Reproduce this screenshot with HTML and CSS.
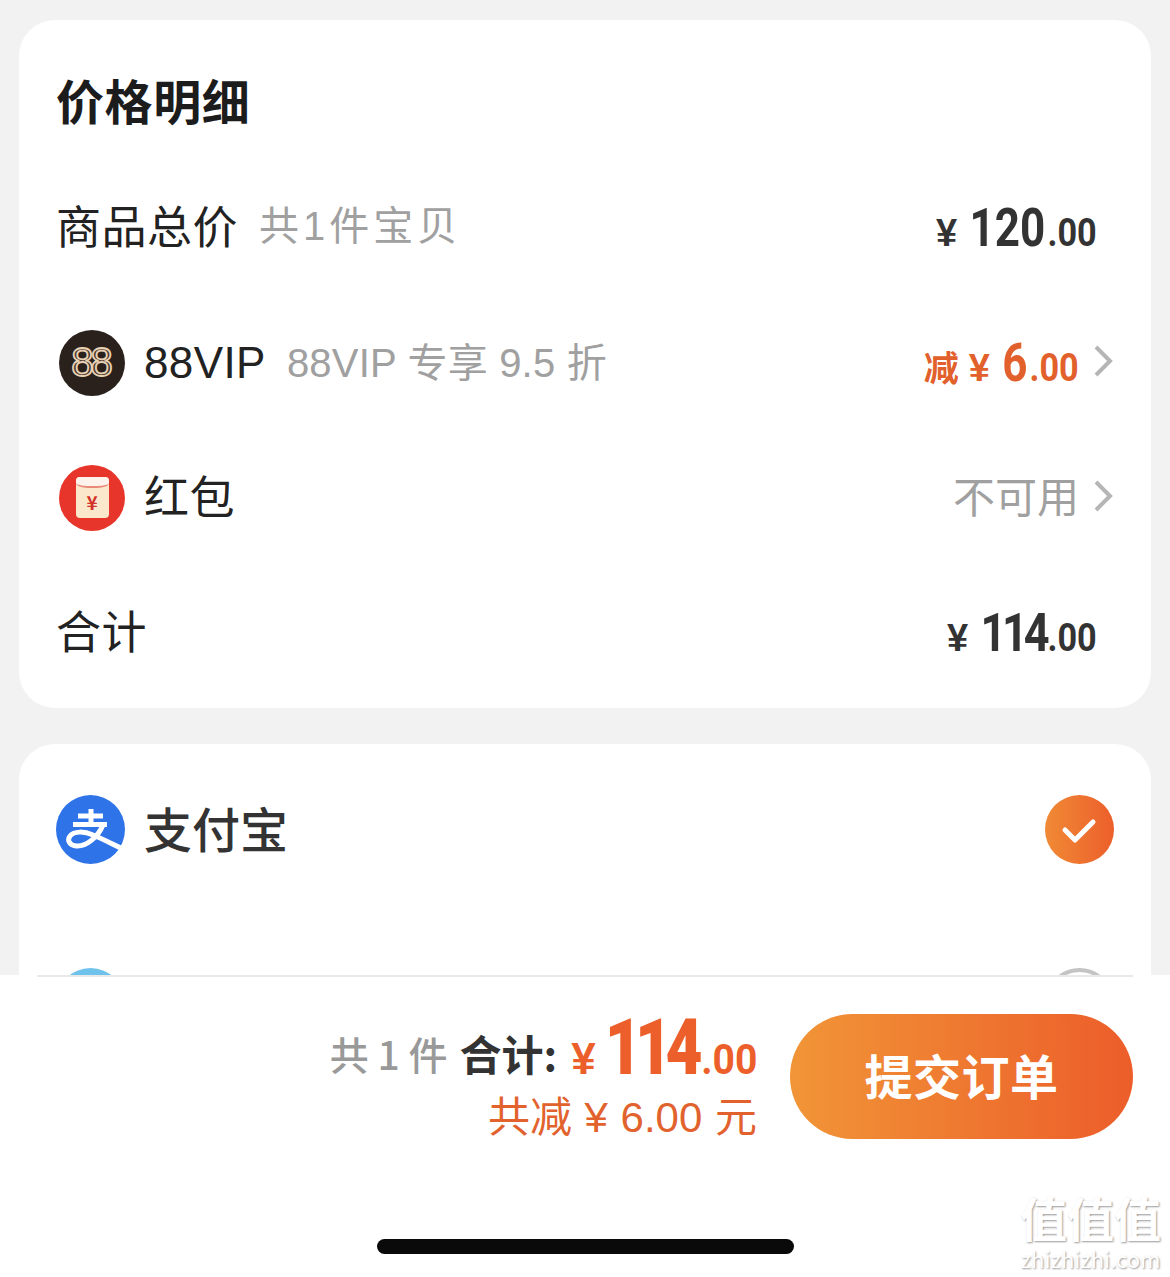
FILE: index.html
```html
<!DOCTYPE html>
<html>
    <head>
        <meta charset="utf-8">
        <title>价格明细</title>
        <link rel="stylesheet" href="styles.css">
    </head>
    <body>
        <main class="content">
            <section class="card price-card">
                <h2 class="card-title">价格明细</h2>

                <div class="row">
                    <span class="label">商品总价</span>
                    <span class="sub sub-first">共1件宝贝</span>
                    <span class="amount amount-end"><i class="yen">¥</i><b>120</b><small>.00</small></span>
                </div>

                <div class="row">
                    <span class="badge badge-vip">88</span>
                    <span class="label label-latin">88VIP</span>
                    <span class="sub">88VIP 专享 9.5 折</span>
                    <span class="amount amount-off"><em>减</em><i class="yen">¥</i><b>6</b><small>.00</small></span>
                    <svg class="chevron" viewBox="0 0 20 32"><path d="M3 2l14 14L3 30"/></svg>
                </div>

                <div class="row">
                    <span class="badge badge-red">
                        <span class="envelope">¥</span>
                    </span>
                    <span class="label">红包</span>
                    <span class="unavailable">不可用</span>
                    <svg class="chevron" viewBox="0 0 20 32"><path d="M3 2l14 14L3 30"/></svg>
                </div>

                <div class="row">
                    <span class="label">合计</span>
                    <span class="amount amount-end amount-total"><i class="yen">¥</i><b>114</b><small>.00</small></span>
                </div>
            </section>

            <section class="card pay-card">
                <div class="pay-row">
                    <svg class="pay-icon" viewBox="0 0 69 69">
                        <circle cx="34.5" cy="34.5" r="34.5" fill="#2f73e8"/>
                        <path class="pay-mark" d="M35 14v15M22 21h25M17 29.5h34"/>
                        <path class="pay-mark" d="M47 30C42 42 30 52 20 51C13 50 11 45 14 41C18 36 28 36 37 40C47 44 58 50 69 55"/>
                    </svg>
                    <span class="pay-name">支付宝</span>
                    <svg class="pay-check" viewBox="0 0 69 69">
                        <defs>
                            <linearGradient id="checkFill" x1="0" y1="0" x2="1" y2="0">
                                <stop offset="0" stop-color="#f08a35"/>
                                <stop offset="1" stop-color="#ec5f2b"/>
                            </linearGradient>
                        </defs>
                        <circle cx="34.5" cy="34.5" r="34.5" fill="url(#checkFill)"/>
                        <path d="M20 35l10 10 18-18" fill="none" stroke="#fff" stroke-width="5" stroke-linecap="round" stroke-linejoin="round"/>
                    </svg>
                </div>
                <div class="pay-row">
                    <span class="pay-icon pay-icon-next"></span>
                    <span class="pay-check pay-check-off"></span>
                </div>
            </section>
        </main>

        <footer class="footer">
            <div class="summary">
                <div class="summary-main">
                    <span class="summary-count">共 1 件</span>
                    <span class="summary-label">合计:</span>
                    <span class="summary-price"><i class="yen">¥</i><b>114</b><small>.00</small></span>
                </div>
                <div class="summary-off">共减 ¥ 6.00 元</div>
            </div>
            <button class="submit" type="button">提交订单</button>
        </footer>

        <div class="home-bar"></div>

        <div class="watermark">
            <span class="watermark-cn">值值值</span>
            <span class="watermark-en">zhizhizhi.com</span>
        </div>
    </body>
</html>
```

FILE: styles.css
```css
* {
    box-sizing: border-box;
}

html, body {
    margin: 0;
    height: 1277px;
    overflow: hidden;
}

body {
    position: relative;
    display: flex;
    flex-direction: column;
    background-color: #f2f2f2;
    color: #222;
    font-family: "Noto Sans CJK SC", "Noto Sans", sans-serif;
}

i, em {
    font-style: normal;
}

/* scrolling part */
.content {
    height: 975px;
    padding: 20px 19px 0;
    overflow: hidden;
    flex: none;
}

.card {
    background-color: #fff;
    border-radius: 36px;
}

.price-card {
    height: 688px;
    padding: 55px 38px 0 37px;
    margin-bottom: 36px;
}

.card-title {
    margin: 0 0 37px;
    font-size: 48px;
    line-height: 48px;
    font-weight: 700;
    letter-spacing: .6px;
    color: #1c1c1c;
}

.row {
    display: flex;
    align-items: center;
    height: 135px;
}

.label {
    padding-bottom: 5px;
    font-size: 45px;
    line-height: 50px;
    letter-spacing: .5px;
    color: #222;
}

.label-latin {
    font-family: "Liberation Sans", sans-serif;
    font-size: 44px;
    padding-bottom: 0;
    letter-spacing: .4px;
}

.sub {
    margin-left: 21px;
    font-family: "Liberation Sans", "Noto Sans CJK SC", sans-serif;
    font-size: 40px;
    line-height: 50px;
    letter-spacing: .2px;
    color: #a0a0a0;
}

.sub-first {
    padding-bottom: 3px;
    letter-spacing: 4px;
}

.badge {
    display: flex;
    align-items: center;
    justify-content: center;
    width: 66px;
    height: 66px;
    margin: 0 19px 0 3px;
    border-radius: 50%;
    flex: none;
}

.badge-vip {
    background-color: #2a211c;
    color: #4a3a30;
    -webkit-text-stroke: 1.8px #e9d2b4;
    font-family: "Liberation Sans", sans-serif;
    font-size: 40px;
    letter-spacing: -3px;
    padding-right: 3px;
}

.badge-red {
    background-color: #e8352b;
}

.envelope {
    position: relative;
    display: flex;
    align-items: center;
    justify-content: center;
    width: 33px;
    height: 41px;
    padding-top: 8px;
    border-radius: 4px;
    background-color: #fbe8cc;
    color: #d2322a;
    font-size: 19px;
    font-weight: 700;
}

/* the flap */
.envelope::before {
    content: "";
    position: absolute;
    top: 0;
    left: 0;
    right: 0;
    height: 9px;
    border-bottom: 2px solid #e8897a;
    border-radius: 4px 4px 12px 12px / 4px 4px 5px 5px;
    background-color: #fdf3ec;
}

.amount {
    display: flex;
    align-items: baseline;
    margin-left: auto;
    color: #333;
    font-family: "Roboto", sans-serif;
}

/* no narrow font here, so the digits get squeezed from the right */
.amount b {
    display: inline-block;
    margin-left: -15px;
    font-size: 53px;
    font-weight: 700;
    line-height: 62px;
    transform: scaleX(.83);
    transform-origin: right;
}

.amount small {
    display: inline-block;
    margin-left: -3px;
    font-size: 38px;
    font-weight: 700;
    transform: scaleX(.9);
    transform-origin: right;
}

.amount .yen {
    margin-right: 12px;
    font-family: "Liberation Sans", sans-serif;
    font-size: 38px;
    font-weight: 700;
}

.amount-end {
    margin-right: 16px;
}

.amount-total b {
    margin-left: -11px;
    letter-spacing: -5px;
    transform: scaleX(.85);
}

.amount-off {
    color: #e2602b;
}

.amount-off em {
    margin-right: 10px;
    font-family: "Noto Sans CJK SC", sans-serif;
    font-size: 35px;
    font-weight: 700;
}

.amount-off b {
    margin-left: -5px;
}

.chevron {
    width: 20px;
    height: 32px;
    margin: -4px 0 0 14px;
    flex: none;
}

.chevron path {
    fill: none;
    stroke: #b5b5b5;
    stroke-width: 4;
}

.unavailable {
    margin-left: auto;
    padding-bottom: 6px;
    font-size: 42px;
    line-height: 50px;
    color: #a0a0a0;
}

/* pay methods */
.pay-card {
    height: 400px;
    padding: 51px 37px 0;
}

.pay-row {
    display: flex;
    align-items: center;
    height: 69px;
    margin-bottom: 104px;
}

.pay-icon {
    display: block;
    width: 69px;
    height: 69px;
    flex: none;
}

.pay-icon-next {
    border-radius: 50%;
    background-color: #6fc2ec;
}

.pay-mark {
    fill: none;
    stroke: #fff;
    stroke-width: 5;
}

.pay-name {
    margin-left: 19px;
    padding-bottom: 6px;
    font-size: 48px;
    font-weight: 500;
    line-height: 60px;
    color: #333;
}

.pay-check {
    display: block;
    width: 69px;
    height: 69px;
    margin-left: auto;
    flex: none;
}

.pay-check-off {
    border: 4px solid #c4c4c4;
    border-radius: 50%;
}

/* bottom bar */
.footer {
    position: relative;
    display: flex;
    flex: 1;
    justify-content: flex-end;
    align-items: flex-start;
    gap: 33px;
    padding: 39px 37px 0 0;
    background-color: #fff;
}

.footer::before {
    content: "";
    position: absolute;
    top: 0;
    left: 37px;
    right: 37px;
    height: 2px;
    background-color: #e9e9e9;
}

.summary {
    text-align: right;
}

.summary-main {
    display: flex;
    align-items: flex-start;
    justify-content: flex-end;
    height: 68px;
}

.summary-count {
    font-size: 39px;
    font-weight: 500;
    line-height: 78px;
    color: #999;
}

.summary-label {
    margin-left: 12px;
    font-size: 42px;
    font-weight: 700;
    line-height: 78px;
    color: #333;
}

.summary-price {
    display: flex;
    align-items: baseline;
    margin-left: 14px;
    color: #ec5f2b;
    font-family: "Roboto", sans-serif;
    font-weight: 700;
}

.summary-price .yen {
    margin-right: 9px;
    font-family: "Liberation Sans", sans-serif;
    font-size: 44px;
}

.summary-price b {
    display: inline-block;
    margin-left: -19px;
    font-size: 77px;
    line-height: 68px;
    letter-spacing: -8px;
    transform: scaleX(.83);
    transform-origin: right;
}

.summary-price small {
    display: inline-block;
    margin-left: 1px;
    font-size: 42px;
    transform: scaleX(.93);
    transform-origin: right;
}

.summary-off {
    margin-top: 11px;
    font-family: "Liberation Sans", "Noto Sans CJK SC", sans-serif;
    font-size: 42px;
    line-height: 50px;
    word-spacing: 1px;
    color: #e2622e;
}

.submit {
    width: 343px;
    height: 125px;
    padding: 0 0 6px;
    border: none;
    border-radius: 63px;
    background: linear-gradient(90deg, #f19537, #ec5d2a);
    color: #fff;
    font-family: inherit;
    font-size: 48px;
    font-weight: 700;
    letter-spacing: .5px;
}

.home-bar {
    position: absolute;
    left: 377px;
    top: 1239px;
    width: 417px;
    height: 15px;
    border-radius: 8px;
    background-color: #0a0a0a;
}

.watermark {
    position: absolute;
    right: 9px;
    bottom: 9px;
    display: flex;
    flex-direction: column;
    align-items: center;
    gap: 9px;
    color: #fff;
    text-shadow: 1px 1px 2px #9a9a9a;
}

.watermark-cn {
    font-size: 47px;
    line-height: 44px;
    font-weight: 700;
}

.watermark-en {
    font-size: 22px;
    line-height: 20px;
}
```
